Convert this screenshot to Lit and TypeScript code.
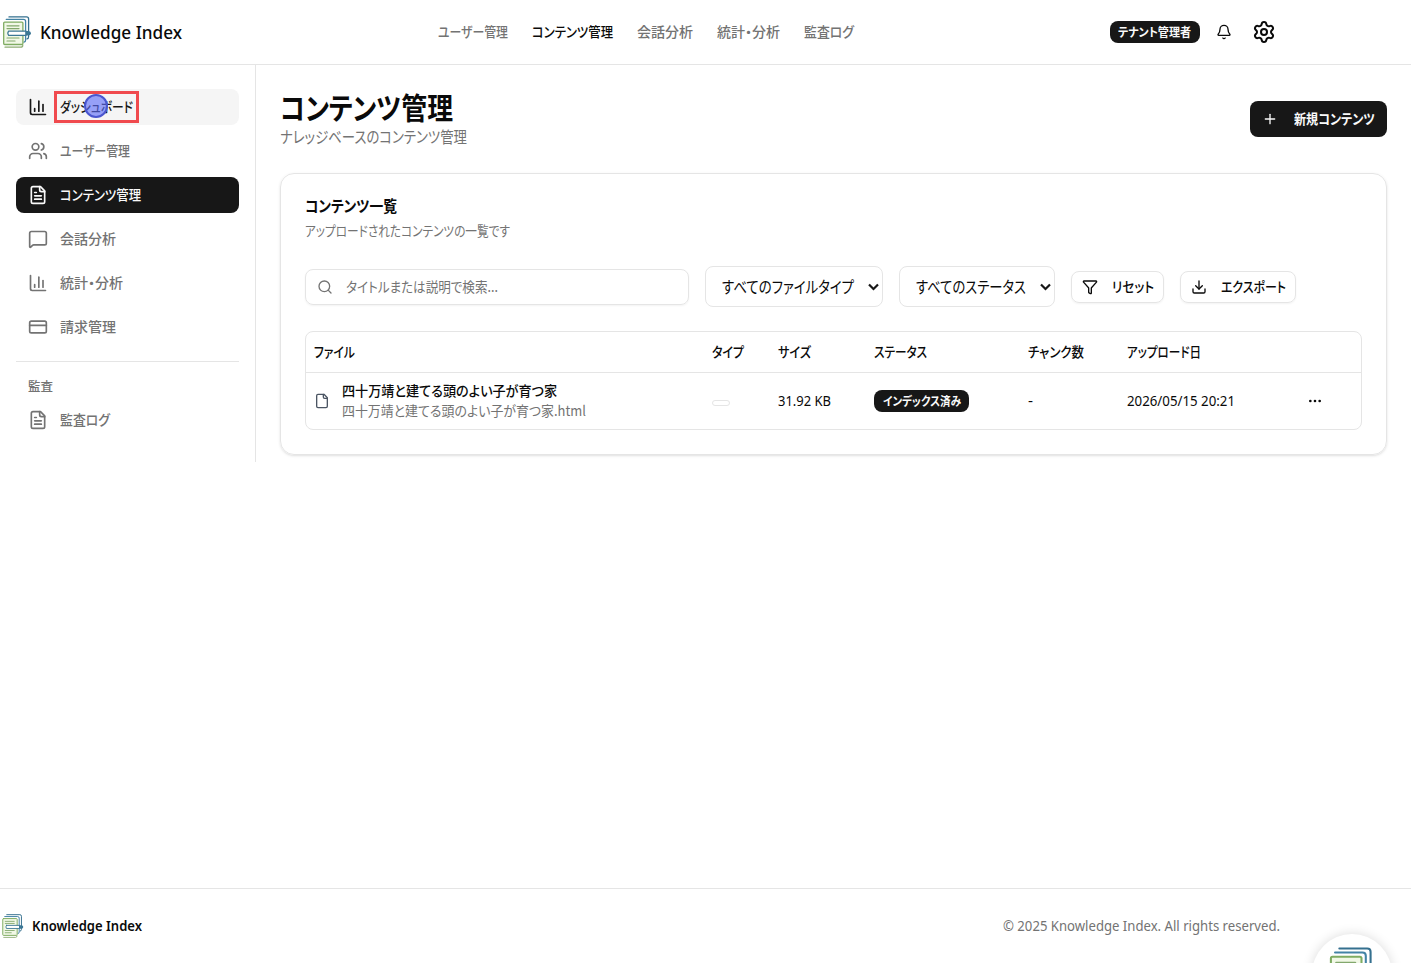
import { LitElement, html, css, svg } from "lit";
import { customElement, property } from "lit/decorators.js";

/** Single line of text condensed or stretched to a given advance width. */
@customElement("fit-text")
class FitText extends LitElement {
  @property({ type: Number }) w = 0;
  @property() text = "";
  static styles = css`
    :host { display: inline-block; white-space: nowrap; flex: none; }
    .t { display: inline-block; transform-origin: 0 50%; white-space: nowrap; }
  `;
  render() {
    return html`<span class="t">${this.text}</span>`;
  }
  updated() {
    const t = this.renderRoot.querySelector(".t") as HTMLElement;
    this.style.width = this.w + "px";
    t.style.transform = "none";
    const natural = t.getBoundingClientRect().width;
    if (natural > 0) t.style.transform = `scaleX(${this.w / natural})`;
  }
}

const fit = (text: string, w: number) => html`<fit-text .text=${text} .w=${w}></fit-text>`;

const shapes: Record<string, unknown> = {
  chart: svg`<path d="M3 3v16a2 2 0 0 0 2 2h16"/><path d="M18 17V9"/><path d="M13 17V5"/><path d="M8 17v-3"/>`,
  users: svg`<path d="M16 21v-2a4 4 0 0 0-4-4H6a4 4 0 0 0-4 4v2"/><circle cx="9" cy="7" r="4"/><path d="M22 21v-2a4 4 0 0 0-3-3.87"/><path d="M16 3.13a4 4 0 0 1 0 7.75"/>`,
  fileText: svg`<path d="M15 2H6a2 2 0 0 0-2 2v16a2 2 0 0 0 2 2h12a2 2 0 0 0 2-2V7Z"/><path d="M14 2v4a2 2 0 0 0 2 2h4"/><path d="M10 9H8"/><path d="M16 13H8"/><path d="M16 17H8"/>`,
  file: svg`<path d="M15 2H6a2 2 0 0 0-2 2v16a2 2 0 0 0 2 2h12a2 2 0 0 0 2-2V7Z"/><path d="M14 2v4a2 2 0 0 0 2 2h4"/>`,
  message: svg`<path d="M22 17a2 2 0 0 1-2 2H6.828a2 2 0 0 0-1.414.586l-2.202 2.202A.71.71 0 0 1 2 21.286V5a2 2 0 0 1 2-2h16a2 2 0 0 1 2 2z"/>`,
  card: svg`<rect width="20" height="14" x="2" y="5" rx="2"/><path d="M2 10h20"/>`,
  bell: svg`<path d="M10.268 21a2 2 0 0 0 3.464 0"/><path d="M3.262 15.326A1 1 0 0 0 4 17h16a1 1 0 0 0 .74-1.673C19.41 13.956 18 12.499 18 8A6 6 0 0 0 6 8c0 4.499-1.411 5.956-2.738 7.326"/>`,
  gear: svg`<path d="M9.671 4.136a2.34 2.34 0 0 1 4.659 0 2.34 2.34 0 0 0 3.319 1.915 2.34 2.34 0 0 1 2.33 4.033 2.34 2.34 0 0 0 0 3.831 2.34 2.34 0 0 1-2.33 4.033 2.34 2.34 0 0 0-3.319 1.915 2.34 2.34 0 0 1-4.659 0 2.34 2.34 0 0 0-3.32-1.915 2.34 2.34 0 0 1-2.33-4.033 2.34 2.34 0 0 0 0-3.831A2.34 2.34 0 0 1 6.35 6.051a2.34 2.34 0 0 0 3.319-1.915"/><circle cx="12" cy="12" r="3"/>`,
  plus: svg`<path d="M5 12h14"/><path d="M12 5v14"/>`,
  search: svg`<circle cx="11" cy="11" r="8"/><path d="m21 21-4.3-4.3"/>`,
  funnel: svg`<path d="M10 20a1 1 0 0 0 .553.895l2 1A1 1 0 0 0 14 21v-7a2 2 0 0 1 .517-1.341L21.74 4.67A1 1 0 0 0 21 3H3a1 1 0 0 0-.742 1.67l7.225 7.989A2 2 0 0 1 10 14z"/>`,
  download: svg`<path d="M12 15V3"/><path d="M21 15v4a2 2 0 0 1-2 2H5a2 2 0 0 1-2-2v-4"/><path d="m7 10 5 5 5-5"/>`,
  dots: svg`<circle cx="12" cy="12" r="1"/><circle cx="19" cy="12" r="1"/><circle cx="5" cy="12" r="1"/>`,
};

const icon = (name: string, size = 20) => html`<svg class="icon" width=${size} height=${size} viewBox="0 0 24 24">${shapes[name]}</svg>`;

const logo = (size: number) => html`<svg class="logo" width=${size} height=${size} viewBox="0 0 32 32" fill="none" stroke-linecap="round" stroke-linejoin="round">
  <path d="M9 .9H26.5Q28.6 .9 28.6 3V20.5Q28.6 22.6 27 22.8" stroke="#35708f" stroke-width="1.3"/>
  <path d="M6.3 3.4H23.5Q25.6 3.4 25.6 5.5V24Q25.6 26 24 26.2" stroke="#4383a5" stroke-width="1.3"/>
  <rect x="3.7" y="6.1" width="19.2" height="22.4" rx="1" fill="#f1f8e6" stroke="#7fac62" stroke-width="1.3"/>
  <path d="M5 31.2H20.6Q22.8 31.2 22.8 29.2" stroke="#8fae74" stroke-width="1.2"/>
  <path d="M7 9.8H19M7 12.6H19M7 22H19M7 25H15" stroke="#83a86d" stroke-width="1.2"/>
  <path d="M8.6 15.2H26V19.3H8.6Q7 17.2 8.6 15.2Z" fill="#fff" stroke="#3c7795" stroke-width="1.2"/>
  <path d="M25.5 15H28.6Q31 15.4 31 17.2Q31 19.2 28.6 19.5H25.5Z" fill="#3c7795"/>
</svg>`;

@customElement("app-root")
class AppRoot extends LitElement {
  static styles = css`
    :host {
      display: flex; flex-direction: column; height: 963px; position: relative; overflow: hidden;
      box-sizing: border-box; background: #fff; color: #0a0a0a;
      font-family: "Noto Sans", "Noto Sans CJK JP", sans-serif; font-size: 14px; line-height: 20px;
      font-feature-settings: "palt" 1;
    }
    * { box-sizing: border-box; }
    .jp { font-family: "Noto Sans CJK JP", sans-serif; }
    .jp fit-text { transform: translateY(-1px); }
    .badge fit-text, .cap fit-text { transform: none; }
    .icon { fill: none; stroke: currentColor; stroke-width: 2; stroke-linecap: round; stroke-linejoin: round; flex: none; display: block; }
    .logo { flex: none; display: block; }
    header { height: 65px; border-bottom: 1px solid #e5e5e5; display: flex; align-items: center; flex: none; padding-right: 135px; }
    .brand { display: flex; align-items: center; gap: 8px; font-size: 18px; line-height: 28px; font-weight: 500; width: 438px; }
    nav.top { display: flex; gap: 24px; font-weight: 500; color: #737373; }
    .on { color: #0a0a0a; }
    .right { margin-left: auto; display: flex; align-items: center; }
    .badge { display: inline-flex; align-items: center; justify-content: center; height: 22px; border-radius: 8px; background: #171717; color: #fafafa; font-size: 12px; line-height: 16px; font-weight: 600; }
    .right .badge { width: 90px; margin-right: 16px; padding-right: 1px; }
    .right .icon + .icon { margin-left: 20px; }
    .body { flex: 1; display: flex; align-items: flex-start; }
    aside { width: 256px; border-right: 1px solid #e5e5e5; padding: 24px 16px; color: #737373; font-weight: 500; }
    .menu { display: flex; flex-direction: column; gap: 8px; }
    .item { height: 36px; border-radius: 8px; display: flex; align-items: center; gap: 12px; padding: 0 12px; }
    .item.hover { background: #f5f5f5; color: #171717; }
    .item.active { background: #171717; color: #fafafa; }
    .group { margin-top: 16px; border-top: 1px solid #e5e5e5; padding-top: 16px; }
    .cap { font-size: 12px; line-height: 16px; padding: 0 12px; margin-bottom: 8px; }
    .target { position: relative; display: flex; }
    .frame { position: absolute; left: -6px; top: -6px; width: 85px; height: 32px; border: 3px solid #f04a4e; }
    .cursor { position: absolute; left: 24px; top: -3px; width: 24px; height: 24px; border-radius: 50%; background: rgba(92, 108, 248, .62); border: 2px solid #4a56cf; }
    main { flex: 1; padding: 24px; display: flex; flex-direction: column; gap: 24px; }
    .head { display: flex; justify-content: space-between; align-items: center; }
    h1 { margin: 0; font-size: 30px; line-height: 36px; font-weight: 700; }
    .sub { font-size: 16px; line-height: 24px; color: #737373; }
    .titles > * { display: flex; }
    .primary { width: 137px; height: 36px; border-radius: 8px; background: #171717; color: #fafafa; display: flex; align-items: center; gap: 16px; padding-left: 12px; font-weight: 600; }
    .card { border: 1px solid #e5e5e5; border-radius: 14px; padding: 24px; height: 282px; box-shadow: 0 1px 3px rgba(0,0,0,.1), 0 1px 2px -1px rgba(0,0,0,.1); }
    .ct { font-size: 16px; line-height: 16px; font-weight: 600; display: flex; }
    .cd { color: #737373; margin-top: 7px; display: flex; }
    .filters { display: flex; align-items: center; gap: 16px; height: 41px; margin-top: 25px; }
    .box { border: 1px solid #e5e5e5; border-radius: 8px; display: flex; align-items: center; }
    .search { width: 384px; height: 36px; padding-left: 11px; gap: 13px; color: #737373; box-shadow: 0 1px 2px rgba(0,0,0,.05); }
    .select { height: 41px; padding: 0 3px 0 16px; font-size: 16px; justify-content: space-between; }
    .chev { width: 11px; height: 8px; fill: none; stroke: #171717; stroke-width: 2.2; }
    .s1 { width: 178px; } .s2 { width: 156px; }
    .btn { height: 32px; padding-left: 10px; gap: 14px; font-weight: 500; box-shadow: 0 1px 2px rgba(0,0,0,.05); }
    .b1 { width: 93px; } .b2 { width: 116px; }
    .table { margin-top: 24px; border: 1px solid #e5e5e5; border-radius: 8px; height: 99px; }
    .tr { display: grid; grid-template-columns: 398px 66px 96px 153.5px 99.5px 180px 1fr; align-items: center; padding-left: 8px; }
    .th { height: 41px; border-bottom: 1px solid #e5e5e5; font-weight: 500; }
    .td { height: 56px; }
    .tr > * { display: flex; }
    .file { align-items: center; gap: 12px; }
    .file .icon { color: #4b5563; }
    .names { display: flex; flex-direction: column; }
    .names > * { display: flex; }
    .strong { font-weight: 500; }
    .muted { color: #737373; }
    .empty { width: 18px; height: 6px; border: 1px solid #e5e5e5; border-radius: 3px; margin-top: 4px; }
    .st { width: 95px; }
    footer { flex: none; height: 75px; border-top: 1px solid #e5e5e5; display: flex; align-items: center; justify-content: space-between; padding-right: 131px; }
    .fb { display: flex; align-items: center; gap: 8px; font-weight: 600; }
    .copy { color: #737373; }
    .fab { position: absolute; left: 1312px; top: 934px; width: 80px; height: 80px; border-radius: 50%; background: #fff; box-shadow: 0 0 12px rgba(0,0,0,.14); padding: 13px 0 0 13px; }
  `;

  item(name: string, text: string, w: number, cls = "") {
    return html`<div class="item ${cls}">${icon(name)}${fit(text, w)}</div>`;
  }

  render() {
    return html`
      <header>
        <div class="brand">${logo(32)}${fit("Knowledge Index", 142)}</div>
        <nav class="top jp">
          ${fit("ユーザー管理", 70)}<span class="on">${fit("コンテンツ管理", 81)}</span>${fit("会話分析", 56)}${fit("統計・分析", 63)}${fit("監査ログ", 50)}
        </nav>
        <div class="right"><span class="badge jp">${fit("テナント管理者", 73)}</span>${icon("bell", 16)}${icon("gear", 24)}</div>
      </header>
      <div class="body">
        <aside class="jp">
          <div class="menu">
            <div class="item hover">${icon("chart")}<div class="target">${fit("ダッシュボード", 73)}<i class="cursor"></i><i class="frame"></i></div></div>
            ${this.item("users", "ユーザー管理", 70)}
            ${this.item("fileText", "コンテンツ管理", 81, "active")}
            ${this.item("message", "会話分析", 56)}
            ${this.item("chart", "統計・分析", 63)}
            ${this.item("card", "請求管理", 56)}
          </div>
          <div class="group">
            <div class="cap">${fit("監査", 25)}</div>
            ${this.item("fileText", "監査ログ", 50)}
          </div>
        </aside>
        <main>
          <div class="head jp">
            <div class="titles">
              <h1>${fit("コンテンツ管理", 173)}</h1>
              <div class="sub">${fit("ナレッジベースのコンテンツ管理", 187)}</div>
            </div>
            <div class="primary">${icon("plus", 16)}${fit("新規コンテンツ", 81)}</div>
          </div>
          <section class="card">
            <div class="ct jp">${fit("コンテンツ一覧", 92)}</div>
            <div class="cd jp">${fit("アップロードされたコンテンツの一覧です", 205)}</div>
            <div class="filters jp">
              <div class="box search">${icon("search", 16)}${fit("タイトルまたは説明で検索...", 152)}</div>
              <div class="box select s1">${fit("すべてのファイルタイプ", 132)}<svg class="chev" viewBox="0 0 11 8"><path d="M1 1.5 5.5 6 10 1.5"/></svg></div>
              <div class="box select s2">${fit("すべてのステータス", 110)}<svg class="chev" viewBox="0 0 11 8"><path d="M1 1.5 5.5 6 10 1.5"/></svg></div>
              <div class="box btn b1">${icon("funnel", 16)}${fit("リセット", 42)}</div>
              <div class="box btn b2">${icon("download", 16)}${fit("エクスポート", 65)}</div>
            </div>
            <div class="table">
              <div class="tr th jp">
                <div>${fit("ファイル", 41)}</div><div>${fit("タイプ", 32)}</div><div>${fit("サイズ", 33)}</div><div>${fit("ステータス", 53)}</div><div>${fit("チャンク数", 56)}</div><div>${fit("アップロード日", 74)}</div><div></div>
              </div>
              <div class="tr td">
                <div class="file">${icon("file", 16)}
                  <div class="names jp"><div class="strong">${fit("四十万靖と建てる頭のよい子が育つ家", 215)}</div><div class="muted">${fit("四十万靖と建てる頭のよい子が育つ家.html", 244)}</div></div>
                </div>
                <div><span class="empty"></span></div>
                <div>${fit("31.92 KB", 53)}</div>
                <div><span class="badge st jp">${fit("インデックス済み", 78)}</span></div>
                <div>${fit("-", 5)}</div>
                <div>${fit("2026/05/15 20:21", 108)}</div>
                <div>${icon("dots", 16)}</div>
              </div>
            </div>
          </section>
        </main>
      </div>
      <footer>
        <div class="fb">${logo(24)}${fit("Knowledge Index", 110)}</div>
        <div class="copy">${fit("© 2025 Knowledge Index. All rights reserved.", 277)}</div>
      </footer>
      <div class="fab">${logo(51)}</div>
    `;
  }
}
